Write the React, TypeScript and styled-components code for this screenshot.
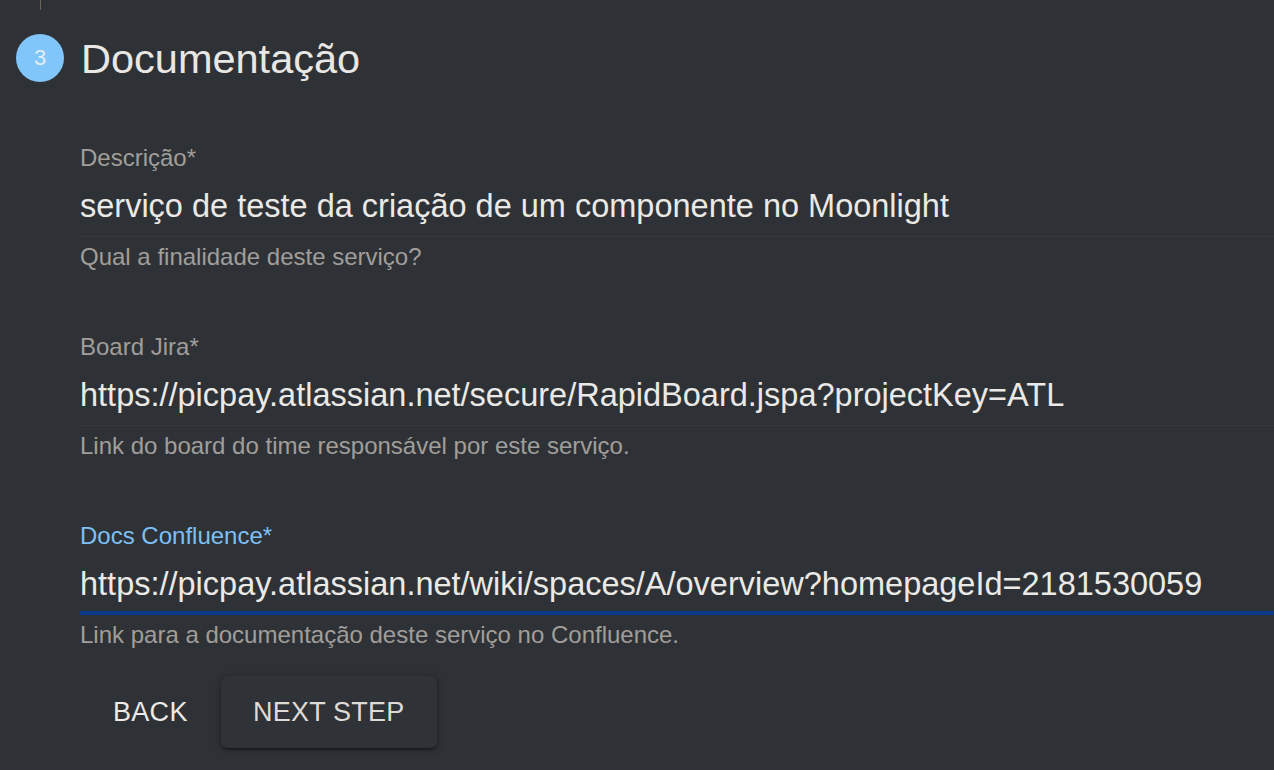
import React from "react";
import styled, { createGlobalStyle } from "styled-components";

const Global = createGlobalStyle`
  html, body { margin: 0; padding: 0; background: #2e3236; }
  body { font-family: "Liberation Sans", Arial, sans-serif; overflow: hidden; }
  * { box-sizing: border-box; }
`;

const Page = styled.div`
  width: 1274px;
  height: 770px;
  background: #2e3236;
  display: flex;
  flex-direction: column;
`;

const Connector = styled.div`
  width: 1px;
  height: 10px;
  margin-left: 40px;
  background: #6c655e;
`;

const StepHeader = styled.div`
  display: flex;
  align-items: center;
  gap: 17px;
  padding-left: 16px;
  margin-top: 23px;
`;

const StepIcon = styled.div`
  width: 48px;
  height: 48px;
  border-radius: 50%;
  background: #80c6fa;
  color: #e3edf3;
  font-size: 22px;
  display: flex;
  align-items: center;
  justify-content: center;
`;

const StepTitle = styled.h2`
  margin: 0;
  font-weight: 400;
  font-size: 41.5px;
  color: #e9e7e4;
  line-height: 48px;
  padding-top: 2px;
`;

const Content = styled.div`
  padding-left: 80px;
  display: flex;
  flex-direction: column;
  margin-top: 63px;
`;

const Field = styled.div`
  display: flex;
  flex-direction: column;
  margin-bottom: 64.5px;
`;

const Label = styled.label<{ $focused?: boolean }>`
  font-size: 24px;
  line-height: 24px;
  color: ${(p) => (p.$focused ? "#7dc0f6" : "#a19e9a")};
`;

const InputWrap = styled.div<{ $focused?: boolean }>`
  margin-top: 16.5px;
  padding-bottom: ${(p) => (p.$focused ? "8px" : "11px")};
  border-bottom: ${(p) => (p.$focused ? "4px solid #0b3b8c" : "1px solid #35393d")};
`;

const Input = styled.input`
  display: block;
  width: 100%;
  border: none;
  outline: none;
  background: transparent;
  padding: 0;
  font-family: "Liberation Sans", Arial, sans-serif;
  font-size: 32.5px;
  line-height: 38px;
  height: 38px;
  color: #ebe9e6;
`;

const Helper = styled.p`
  margin: 6px 0 0;
  font-size: 24px;
  line-height: 28px;
  color: #a19e9a;
`;

const Actions = styled.div`
  display: flex;
  align-items: center;
  margin-top: -37px;
  padding-left: 8px;
`;

const TextButton = styled.button`
  background: transparent;
  border: none;
  color: #ece9e6;
  font-family: "Liberation Sans", Arial, sans-serif;
  font-size: 27px;
  letter-spacing: 0.3px;
  font-weight: 500;
  height: 72px;
  padding: 0 25px;
  cursor: pointer;
  margin-right: 8px;
`;

const RaisedButton = styled.button`
  background: #2f3337;
  border: none;
  border-radius: 7px;
  color: #dedad6;
  font-family: "Liberation Sans", Arial, sans-serif;
  font-size: 27px;
  letter-spacing: 0.2px;
  font-weight: 500;
  height: 72px;
  width: 216px;
  cursor: pointer;
  box-shadow: 0 3px 2px -2px rgba(0,0,0,0.35), 0 2px 4px rgba(0,0,0,0.25), 0 1px 8px rgba(0,0,0,0.18);
`;

const fields = [
  {
    label: "Descrição*",
    value: "serviço de teste da criação de um componente no Moonlight",
    helper: "Qual a finalidade deste serviço?",
  },
  {
    label: "Board Jira*",
    value: "https://picpay.atlassian.net/secure/RapidBoard.jspa?projectKey=ATL",
    helper: "Link do board do time responsável por este serviço.",
  },
  {
    label: "Docs Confluence*",
    value: "https://picpay.atlassian.net/wiki/spaces/A/overview?homepageId=2181530059",
    helper: "Link para a documentação deste serviço no Confluence.",
    focused: true,
  },
];

export default function App() {
  return (
    <Page>
      <Global />
      <Connector />
      <StepHeader>
        <StepIcon>3</StepIcon>
        <StepTitle>Documentação</StepTitle>
      </StepHeader>
      <Content>
        {fields.map((f) => (
          <Field key={f.label}>
            <Label $focused={f.focused}>{f.label}</Label>
            <InputWrap $focused={f.focused}>
              <Input defaultValue={f.value} readOnly />
            </InputWrap>
            <Helper>{f.helper}</Helper>
          </Field>
        ))}
        <Actions>
          <TextButton>BACK</TextButton>
          <RaisedButton>NEXT STEP</RaisedButton>
        </Actions>
      </Content>
    </Page>
  );
}
